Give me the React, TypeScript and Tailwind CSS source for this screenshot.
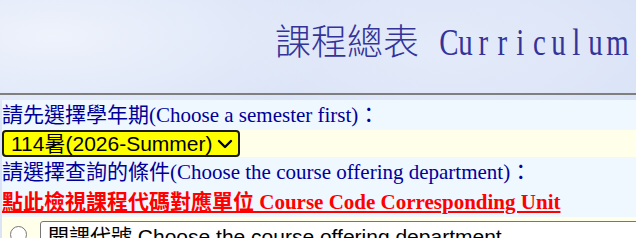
const LATIN = "Curriculum".split("");

export default function App() {
  return (
    <div className="w-[636px] h-[238px] overflow-hidden bg-[#dbe4f7] bg-[radial-gradient(ellipse_at_8%_15%,rgba(240,244,252,0.9),transparent_35%),radial-gradient(ellipse_at_30%_75%,rgba(200,214,240,0.7),transparent_30%),radial-gradient(ellipse_at_70%_20%,rgba(230,236,250,0.8),transparent_35%),radial-gradient(ellipse_at_95%_80%,rgba(226,232,248,0.8),transparent_30%)]">
      <header className="h-[93px] pl-[275px] pt-[19px] whitespace-nowrap text-[#333399] text-[36px] leading-[40px] flex items-baseline">
        <span className="font-['Noto_Sans_CJK_TC',sans-serif] font-light">課程總表</span>
        <span className="inline-block w-[18px]" />
        <span className="font-['Liberation_Serif',serif] text-[38px] flex">
          {LATIN.map((ch, i) => (
            <span key={i} className="inline-block w-[18.6px] text-center scale-x-[0.76]">
              {ch}
            </span>
          ))}
        </span>
      </header>
      <div className="h-[2px] bg-[#7f7f7f]" />
      <div className="h-[5px]" />
      <div className="ml-[2px] text-[21px] whitespace-nowrap">
        <div className="h-[30px] leading-[30px] bg-[#eff7ff] text-[#000099] font-['Liberation_Serif','Noto_Sans_CJK_TC',serif]">
          請先選擇學年期(Choose a semester first)：
        </div>
        <div className="h-[27px] bg-[#ffffea] flex">
          <div className="w-[238px] h-[27px] bg-[#ffff00] border-2 border-[#1a1a1a] rounded-[4px] flex items-center pl-[7px] pr-[5px] font-['Liberation_Sans','Noto_Sans_CJK_TC',sans-serif] text-black text-[21px] leading-none">
            <span className="flex-1">114暑(2026-Summer)</span>
            <svg width="16" height="12" viewBox="0 0 16 12" className="mt-[1px]">
              <path d="M2 3 L8 9 L14 3" fill="none" stroke="#000" strokeWidth="2.4" strokeLinecap="round" strokeLinejoin="round" />
            </svg>
          </div>
        </div>
        <div className="h-[30px] leading-[30px] bg-[#eff7ff] text-[#000099] font-['Liberation_Serif','Noto_Sans_CJK_TC',serif]">
          請選擇查詢的條件(Choose the course offering department)：
        </div>
        <div className="h-[30px] leading-[30px] bg-[#eff7ff] font-['Liberation_Serif','Noto_Sans_CJK_TC',serif] font-bold">
          <a href="#" className="text-[#ff0000] underline decoration-2 underline-offset-[2px]">
            點此檢視課程代碼對應單位 Course Code Corresponding Unit
          </a>
        </div>
        <div className="h-[40px] bg-[#ffffea] flex items-start pt-[4px]">
          <div className="ml-[8px] mt-[5px] w-[17px] h-[17px] rounded-full border border-[#767676] bg-white shrink-0" />
          <div className="ml-[13px] h-[30px] flex-1 -mr-[40px] bg-white border border-[#767676] rounded-[3px] pl-[7px] pt-[2px] text-black font-['Liberation_Sans','Noto_Sans_CJK_TC',sans-serif] text-[21px] leading-[26px]">
            開課代號 Choose the course offering department
          </div>
        </div>
      </div>
    </div>
  );
}
